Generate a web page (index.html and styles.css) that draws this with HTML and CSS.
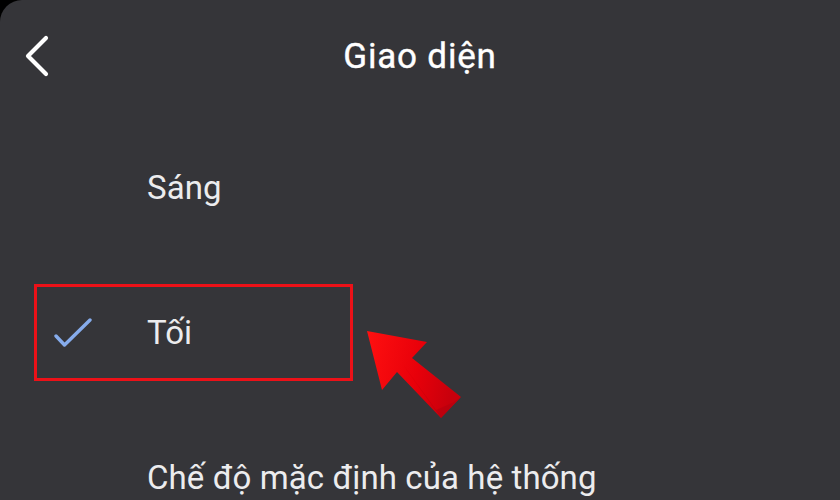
FILE: index.html
```html
<!DOCTYPE html>
<html lang="vi">
<head>
<meta charset="utf-8">
<title>Giao diện</title>
<link rel="stylesheet" href="styles.css">
</head>
<body>
<div class="screen">
  <header class="topbar">
    <div class="back">
      <svg width="28" height="44" viewBox="0 0 28 44" aria-hidden="true">
        <path d="M22 4 L4 22 L22 40" fill="none" stroke="#ffffff" stroke-width="4.2" stroke-linecap="round" stroke-linejoin="round"/>
      </svg>
    </div>
    <h1 class="title">Giao diện</h1>
    <div></div>
  </header>
  <ul class="options">
    <li class="option"><span class="icon"></span><span class="label">Sáng</span></li>
    <li class="option selected">
      <span class="icon">
        <svg width="40" height="34" viewBox="0 0 40 34" aria-hidden="true">
          <path d="M2 20 L10.5 29 L36 4" fill="none" stroke="#86acec" stroke-width="3.4" stroke-linecap="round" stroke-linejoin="round"/>
        </svg>
      </span>
      <span class="label">Tối</span>
    </li>
    <li class="option"><span class="icon"></span><span class="label">Chế độ mặc định của hệ thống</span></li>
  </ul>
  <div class="highlight"></div>
  <svg class="pointer" width="110" height="100" viewBox="360 325 110 100" aria-hidden="true">
    <defs>
      <linearGradient id="rg" x1="0" y1="0" x2="1" y2="0.2">
        <stop offset="0" stop-color="#ff1010"/>
        <stop offset="0.6" stop-color="#e8000a"/>
        <stop offset="1" stop-color="#c8000c"/>
      </linearGradient>
    </defs>
    <polygon points="367,331 427,342 412,358 461,397 441,418 397,372 382,390" fill="url(#rg)"/>
    <polygon points="404,366 441,418 461,397 452,403 436,410" fill="#b3000e" opacity="0.55"/>
  </svg>
</div>
</body>
</html>
```
FILE: styles.css
```css
html, body {
  margin: 0;
  padding: 0;
  background: #000;
}
.screen {
  position: relative;
  width: 840px;
  height: 500px;
  overflow: hidden;
  background: #353539;
  border-top-left-radius: 22px;
  font-family: Roboto, "Liberation Sans", sans-serif;
  color: #ececee;
}
.topbar {
  height: 115px;
  box-sizing: border-box;
  padding-bottom: 3px;
  display: grid;
  grid-template-columns: 1fr auto 1fr;
  align-items: center;
}
.back {
  padding-left: 24px;
  display: flex;
  align-items: center;
}
.back svg { display: block; }
.title {
  margin: 0;
  font-size: 35px;
  line-height: 35px;
  font-weight: 400;
  color: #ffffff;
  letter-spacing: 0.8px;
  -webkit-text-stroke: 0.4px #ffffff;
}
.options {
  list-style: none;
  margin: 0;
  padding: 0;
}
.option {
  height: 145px;
  display: flex;
  align-items: center;
}
.icon {
  width: 147px;
  box-sizing: border-box;
  padding-left: 54px;
  display: flex;
  align-items: center;
}
.icon svg { display: block; }
.label {
  font-size: 33px;
  line-height: 33px;
  font-weight: 400;
  letter-spacing: 0.1px;
}
.highlight {
  position: absolute;
  left: 34px;
  top: 284px;
  width: 313px;
  height: 91px;
  border: 3px solid #ec1118;
}
.pointer {
  position: absolute;
  left: 360px;
  top: 325px;
}
```
